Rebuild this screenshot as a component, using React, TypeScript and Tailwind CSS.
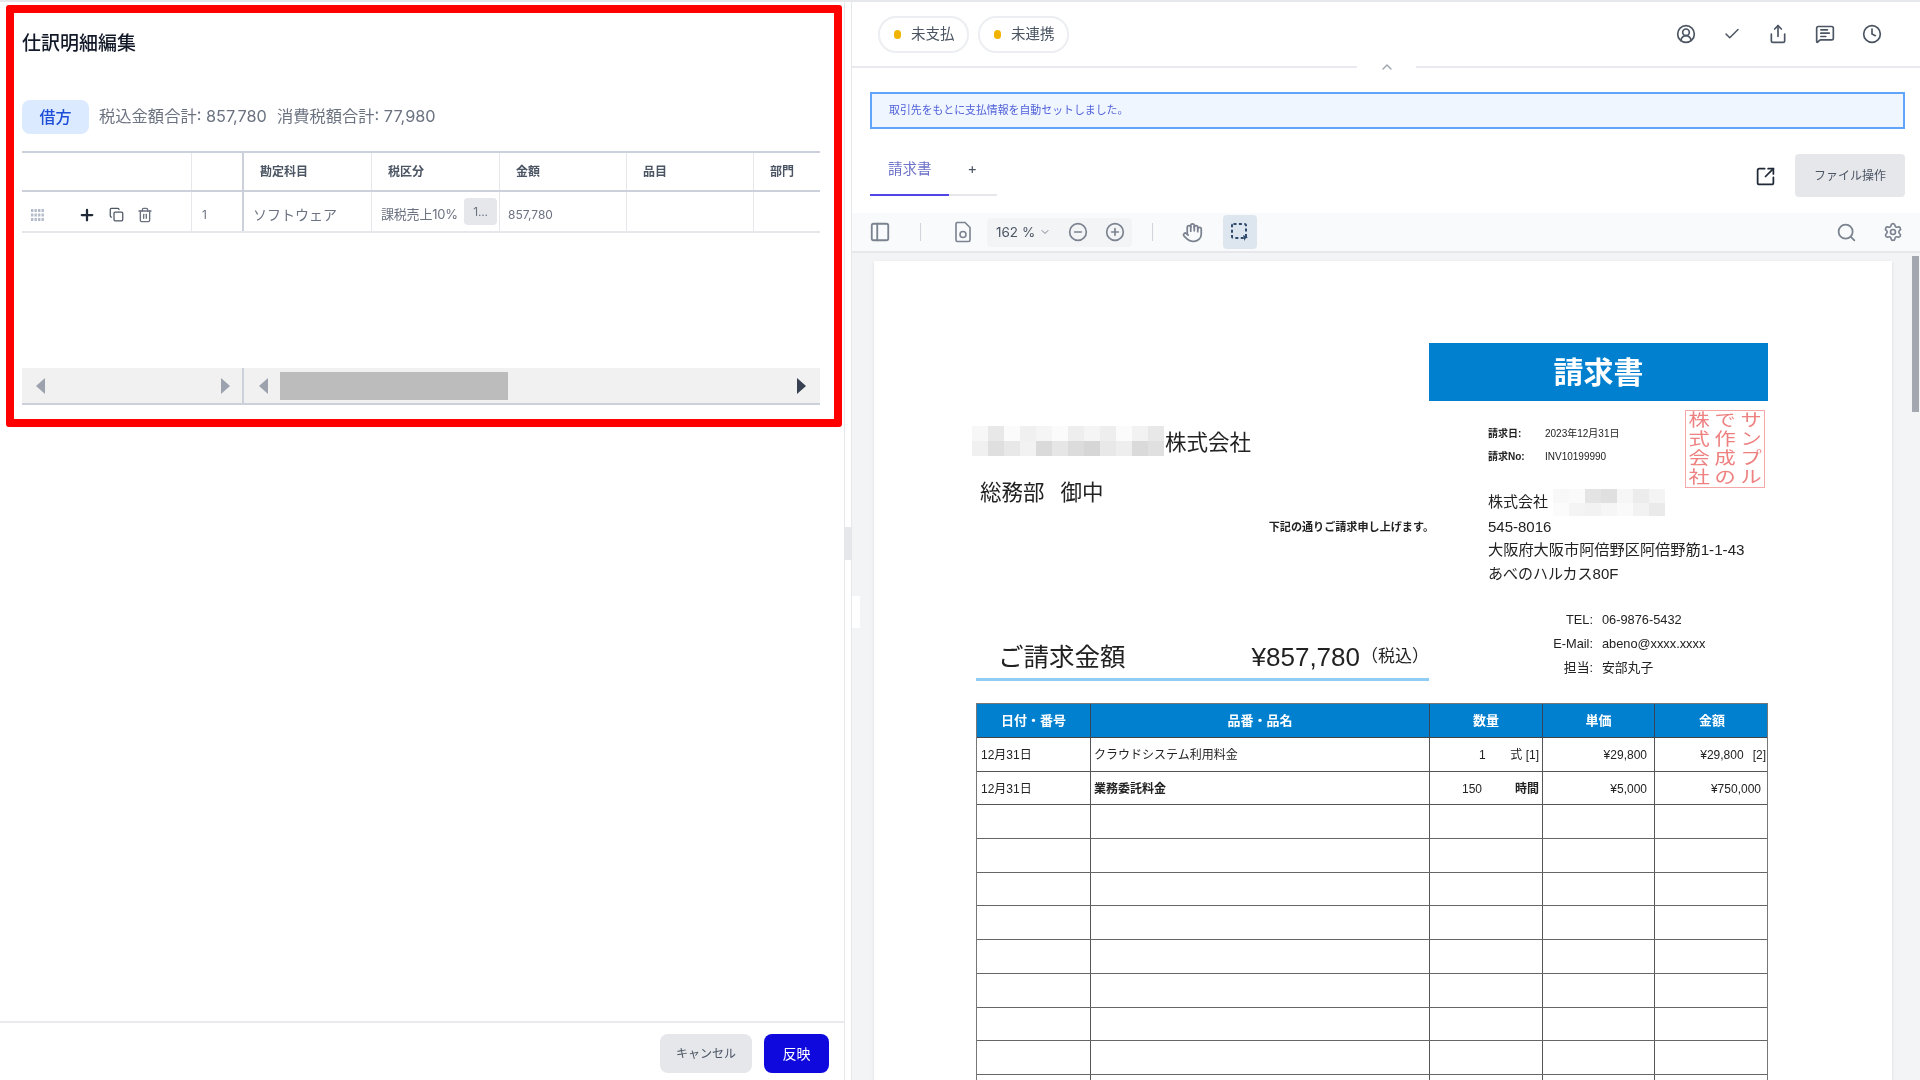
import { Check, ChevronDown, ChevronUp, CircleMinus, CirclePlus, CircleUserRound, Clock, Copy, Hand, MessageSquareText, PanelLeft, Plus, Search, Settings, Share, SquareArrowOutUpRight, Trash2 } from 'lucide-react';

const jaFont = "font-['Inter','Noto_Sans_CJK_JP',sans-serif]";
const docFont = "font-['Liberation_Sans','Noto_Sans_CJK_JP',sans-serif]";

const mosaicA = [
  ['bg-[#f7f7f7]', 'bg-[#e8e8e8]', 'bg-[#fbfbfb]', 'bg-[#f0f0f0]', 'bg-[#f5f5f5]', 'bg-[#fbfbfb]', 'bg-[#eeeeee]', 'bg-[#f5f5f5]', 'bg-[#eeeeee]', 'bg-[#fbfbfb]', 'bg-[#f2f2f2]', 'bg-[#e8e8e8]'],
  ['bg-[#f0f0f0]', 'bg-[#dfdfdf]', 'bg-[#e8e8e8]', 'bg-[#f2f2f2]', 'bg-[#dadada]', 'bg-[#e6e6e6]', 'bg-[#dcdcdc]', 'bg-[#d6d6d6]', 'bg-[#e8e8e8]', 'bg-[#eeeeee]', 'bg-[#dadada]', 'bg-[#e0e0e0]'],
];

const mosaicB = [
  ['bg-[#f8f8f8]', 'bg-[#fafafa]', 'bg-[#e4e4e4]', 'bg-[#e0e0e0]', 'bg-[#f6f6f6]', 'bg-[#ececec]', 'bg-[#f4f4f4]'],
  ['bg-[#fbfbfb]', 'bg-[#f4f4f4]', 'bg-[#f2f2f2]', 'bg-[#f6f6f6]', 'bg-[#fafafa]', 'bg-[#f2f2f2]', 'bg-[#eaeaea]'],
];

const stamp = ['株', 'で', 'サ', '式', '作', 'ン', '会', '成', 'プ', '社', 'の', 'ル'];

const Mosaic = ({ rows, cell }: { rows: string[][]; cell: string }) => (
  <div className="flex flex-col shrink-0">
    {rows.map((row, i) => (
      <div key={i} className="flex">
        {row.map((c, j) => (
          <div key={j} className={`${cell} ${c}`} />
        ))}
      </div>
    ))}
  </div>
);

const Arrow = ({ dir, dark }: { dir: 'left' | 'right'; dark?: boolean }) => (
  <svg width="9" height="16" viewBox="0 0 9 16" className={dark ? 'fill-[#374151]' : 'fill-[#9ca3af]'}>
    <polygon points={dir === 'left' ? '9,0 9,16 0,8' : '0,0 0,16 9,8'} />
  </svg>
);

const Grip = () => (
  <svg width="14" height="12" viewBox="0 0 14 12" className="fill-[#b4bccb]">
    {[0, 3.5, 7, 10.5].flatMap((x) =>
      [0, 4.5, 9].map((y) => <rect key={`${x}-${y}`} x={x} y={y} width="2.4" height="3" />),
    )}
  </svg>
);

const Pill = ({ label }: { label: string }) => (
  <div className="flex items-center w-[91px] h-[37px] pl-[14px] rounded-[18px] border-2 border-[#eceef2] text-[14.5px] text-[#4b5563]">
    <span className="w-[7px] h-[9px] rounded-full bg-[#f0b400] mr-[10px]" />
    {label}
  </div>
);

const headCols = ['勘定科目', '税区分', '金額', '品目', '部門'];

const JournalPanel = () => (
  <section className="ml-[6px] mr-[2px] mt-[3px] h-[422px] border-8 border-[#ff0000] rounded-[3px] pl-2 pr-[14px] pt-[17px] pb-[14px] flex flex-col bg-white">
    <h2 className="text-[19px] leading-7 font-medium text-[#111827]">仕訳明細編集</h2>
    <div className="flex items-center mt-[42px]">
      <span className="w-[67px] h-[34px] rounded-lg bg-[#dbeafe] text-[#1d4ed8] text-[16px] font-medium flex items-center justify-center">借方</span>
      <p className="ml-[10px] -mt-[1px] text-[16.3px] text-[#6b7280] whitespace-nowrap">税込金額合計: 857,780<span className="ml-[10px]">消費税額合計: 77,980</span></p>
    </div>
    <div className="mt-[17px] flex-1 flex flex-col">
      <div className="grid grid-cols-[170px_52px_128px_128px_127px_127px_66px] h-[41px] border-y-2 border-[#cbd0da] text-[12px] font-bold text-[#4b5563]">
        <div className="border-r border-[#e5e7eb]" />
        <div className="border-r-2 border-[#cbd0da]" />
        {headCols.map((h, i) => (
          <div key={h} className={`flex items-center pl-4 ${i < 4 ? 'border-r border-[#e5e7eb]' : ''}`}>{h}</div>
        ))}
      </div>
      <div className="grid grid-cols-[170px_52px_128px_128px_127px_127px_66px] h-[41px] border-b-2 border-[#e5e7eb] text-[#6b7280]">
        <div className="flex items-center pl-[9px] pt-[6px] border-r border-[#e5e7eb]">
          <Grip />
          <Plus size={18} strokeWidth={3} className="ml-[33px] text-[#1f2937]" />
          <Copy size={15} className="ml-[13px] text-[#4b5563]" />
          <Trash2 size={16} className="ml-[13px] text-[#6b7280]" />
        </div>
        <div className="flex items-center pl-[10px] pt-[6px] text-[12px] border-r-2 border-[#cbd0da]">1</div>
        <div className="flex items-center pl-[9px] pt-[5px] text-[14px] border-r border-[#e5e7eb]">ソフトウェア</div>
        <div className="flex items-center pl-[9px] pt-[6px] text-[13px] tracking-[-0.2px] border-r border-[#e5e7eb] whitespace-nowrap">
          課税売上10%
          <span className="ml-auto mr-[2px] -mt-[6px] w-[33px] h-[27px] rounded-sm bg-[#e5e7eb] flex items-center justify-center text-[12px]">1...</span>
        </div>
        <div className="flex items-center pl-2 pt-[6px] text-[12px] border-r border-[#e5e7eb]">857,780</div>
        <div className="border-r border-[#e5e7eb]" />
        <div />
      </div>
      <div className="flex-1" />
      <div className="flex h-[37px] border-b-2 border-[#cbd0da] bg-[#f1f1f1]">
        <div className="w-[222px] flex items-center justify-between pl-[14px] pr-[12px] border-r-2 border-[#cbd0da]">
          <Arrow dir="left" />
          <Arrow dir="right" />
        </div>
        <div className="flex-1 flex items-center pl-[15px] pr-[14px]">
          <Arrow dir="left" />
          <div className="ml-[12px] w-[228px] h-[28px] bg-[#bcbcbc]" />
          <div className="ml-auto"><Arrow dir="right" dark /></div>
        </div>
      </div>
    </div>
  </section>
);

const contactRows = [
  ['TEL:', '06-9876-5432'],
  ['E-Mail:', 'abeno@xxxx.xxxx'],
  ['担当:', '安部丸子'],
];

const lineRows = [
  ['12月31日', 'クラウドシステム利用料金', '1', '式 [1]', '¥29,800', '¥29,800', '[2]'],
  ['12月31日', '業務委託料金', '150', '時間', '¥5,000', '¥750,000', ''],
];

const tableCols = 'grid grid-cols-[114px_339px_113px_112px_114px]';

const Invoice = () => (
  <div className={`w-[1018px] h-[820px] ml-[22px] mt-[8px] bg-white shadow-sm pl-[102px] pt-[82px] overflow-hidden ${docFont} text-[#222222]`}>
    <div className="w-[792px] flex">
      <div className="w-[453px]">
        <div className="mt-[83px] -ml-[4px] flex items-center h-[30px]">
          <Mosaic rows={mosaicA} cell="w-4 h-[15px]" />
          <span className="ml-[1px] mt-[4px] text-[21.5px]">株式会社</span>
        </div>
        <p className="mt-[22px] ml-[4px] text-[21.5px] leading-[30px]">総務部<span className="ml-4">御中</span></p>
        <p className="mt-[11px] -mr-[5px] text-right text-[11.1px] leading-4 font-bold">下記の通りご請求申し上げます。</p>
        <div className="mt-[101px] h-[45px] pl-[22px] flex items-center border-b-[3px] border-[#90cdf4]">
          <span className="text-[25.5px]">ご請求金額</span>
          <span className="ml-auto text-[26px]">¥857,780</span>
          <span className="ml-[1px] text-[17px] whitespace-nowrap">（税込）</span>
        </div>
      </div>
      <div className="relative w-[339px]">
        <div className="h-[58px] bg-[#0080cf] flex items-center justify-center text-white text-[30px] font-bold">請求書</div>
        <div className="pl-[59px]">
          <p className="mt-[26px] flex text-[10px] leading-[14px]"><b className="w-[57px]">請求日:</b>2023年12月31日</p>
          <p className="mt-[9px] flex text-[10px] leading-[14px]"><b className="w-[57px]">請求No:</b>INV10199990</p>
          <div className="mt-[25px] flex items-center h-[27px] text-[15px]">
            株式会社
            <div className="ml-[5px]"><Mosaic rows={mosaicB} cell="w-4 h-[13.5px]" /></div>
          </div>
          <p className="-mt-[1px] text-[15px] leading-[23px]">545-8016</p>
          <p className="text-[15.2px] leading-6 whitespace-nowrap">大阪府大阪市阿倍野区阿倍野筋1-1-43</p>
          <p className="text-[15px] leading-6">あべのハルカス80F</p>
          <div className="mt-[22px]">
            {contactRows.map(([k, v]) => (
              <div key={k} className="grid grid-cols-[105px_1fr] gap-x-[9px] text-[12.8px] leading-6">
                <span className="text-right">{k}</span>
                <span>{v}</span>
              </div>
            ))}
          </div>
        </div>
        <div className="absolute left-[256px] top-[67px] w-[80px] h-[78px] border border-[#f5a8a8] grid grid-cols-3 grid-rows-4 text-[17px] leading-[19px] text-[#ee8080] text-center">
          {stamp.map((s) => <span key={s} className="inline-block scale-x-125">{s}</span>)}
        </div>
      </div>
    </div>
    <div className="mt-[22px] w-[792px] border-x border-[#777777] border-t border-[#777777]">
      <div className={`${tableCols} h-[34px] bg-[#0080cf] border-b border-[#444444] text-white text-[13px] font-bold text-center`}>
        {['日付・番号', '品番・品名', '数量', '単価', '金額'].map((h, i) => (
          <div key={h} className={`flex items-center justify-center ${i < 4 ? 'border-r border-[#33475b]' : ''}`}>{h}</div>
        ))}
      </div>
      {lineRows.map((r, i) => (
        <div key={i} className={`${tableCols} h-[33.7px] border-b border-[#555555] text-[12px]`}>
          <div className="flex items-center pl-[4px] pt-[2px] border-r border-[#555555]">{r[0]}</div>
          <div className={`flex items-center pl-[3px] pt-[2px] border-r border-[#555555] ${i === 1 ? 'font-bold' : ''}`}>{r[1]}</div>
          <div className="flex items-center border-r border-[#555555] pr-[3px] pt-[2px]">
            <span className={i === 0 ? 'ml-[49px]' : 'ml-[32px]'}>{r[2]}</span>
            <span className={`ml-auto ${i === 1 ? 'font-bold' : ''}`}>{r[3]}</span>
          </div>
          <div className="flex items-center justify-end pr-[7px] pt-[2px] border-r border-[#555555]">{r[4]}</div>
          <div className="flex items-center justify-end pr-[8px] pt-[2px] gap-[9px]">
            <span>{r[5]}</span>
            {r[6] && <span className="-mr-[5px]">{r[6]}</span>}
          </div>
        </div>
      ))}
      {Array.from({ length: 10 }).map((_, i) => (
        <div key={i} className={`${tableCols} h-[33.7px] border-b border-[#666666]`}>
          <div className="border-r border-[#555555]" />
          <div className="border-r border-[#555555]" />
          <div className="border-r border-[#555555]" />
          <div className="border-r border-[#555555]" />
          <div />
        </div>
      ))}
    </div>
  </div>
);

const ViewerPanel = () => (
  <div className="relative flex-1 flex flex-col border-l border-[#e5e7eb] overflow-hidden">
    <div className="h-[64px] flex items-center pl-[26px] pr-[38px] shrink-0 text-[#4b5563]">
      <div className="flex items-center gap-[9px]">
        <Pill label="未支払" />
        <Pill label="未連携" />
      </div>
      <div className="ml-auto flex items-center gap-[27px]">
        <CircleUserRound size={20} />
        <Check size={18} />
        <Share size={20} />
        <MessageSquareText size={20} />
        <Clock size={20} />
      </div>
    </div>
    <div className="relative h-[2px] shrink-0 bg-[#e8eaf0]">
      <div className="absolute left-[505px] -top-[6px] w-[59px] h-[14px] bg-white flex items-center justify-center">
        <ChevronUp size={16} className="text-[#9ca3af]" />
      </div>
    </div>
    <div className="ml-[18px] mr-[15px] mt-[24px] h-[37px] shrink-0 border-2 border-[#60a5fa] bg-[#eff6ff] flex items-center pl-[17px] text-[10.9px] text-[#4f5fd8] whitespace-nowrap">
      取引先をもとに支払情報を自動セットしました。
    </div>
    <div className="ml-[18px] mr-[15px] mt-[25px] h-[43px] shrink-0 flex">
      <div className="w-[127px] h-[42px] flex flex-col">
        <div className="flex-1 flex items-start pt-[5px] pl-[18px] text-[14.5px] text-[#6d72c9] leading-5">
          請求書
          <span className="ml-[36px] text-[#4b5563]">+</span>
        </div>
        <div className="h-[2px] bg-[#e5e7eb] -mb-0">
          <div className="w-[79px] h-[2px] bg-[#4f46e5]" />
        </div>
      </div>
      <div className="ml-auto flex items-center">
        <SquareArrowOutUpRight size={21} className="text-[#1f2937] mt-[2px]" />
        <button type="button" className="ml-[19px] w-[110px] h-[43px] rounded bg-[#e5e7eb] text-[12px] text-[#4b5563]">ファイル操作</button>
      </div>
    </div>
    <div className="mt-[16px] h-[40px] shrink-0 flex items-center pl-[17px] pr-[17px] bg-[#f9fafb] border-b-2 border-[#e5e7eb] text-[#7b8290]">
      <PanelLeft size={22} />
      <span className="ml-[29px] w-px h-[18px] bg-[#d1d5db]" />
      <svg width="18" height="22" viewBox="0 0 18 22" fill="none" stroke="currentColor" strokeWidth="1.6" className="ml-[33px]">
        <path d="M3 1.5h8l5 5V19a1.5 1.5 0 0 1-1.5 1.5h-11A1.5 1.5 0 0 1 2 19V3a1.5 1.5 0 0 1 1-1.5z" />
        <circle cx="9" cy="13.5" r="3" />
      </svg>
      <div className="ml-[15px] w-[145px] h-[29px] rounded bg-[#f3f4f6] flex items-center pl-[9px]">
        <span className="text-[13.5px] text-[#4b5563] whitespace-nowrap">162 %</span>
        <ChevronDown size={12} className="ml-[4px]" />
        <CircleMinus size={20} className="ml-[17px]" />
        <CirclePlus size={20} className="ml-[17px]" />
      </div>
      <span className="ml-[20px] w-px h-[18px] bg-[#d1d5db]" />
      <Hand size={21} className="ml-[29px]" />
      <div className="ml-[20px] w-[34px] h-[34px] rounded bg-[#dde6ef] flex items-center justify-center">
        <svg width="20" height="20" viewBox="0 0 20 20" fill="none" stroke="#2f4a6d" strokeWidth="2" strokeDasharray="3 2.4">
          <rect x="2" y="2" width="14" height="14" rx="1.5" />
          <path d="M13 13l5 2.5-2.5 1-1 2.5z" fill="#2f4a6d" stroke="none" />
        </svg>
      </div>
      <Search size={21} className="ml-auto mr-[26px]" />
      <Settings size={20} />
    </div>
    <div className="flex-1 flex bg-[#f3f4f6] overflow-hidden">
      <Invoice />
      <div className="ml-auto w-2 pt-[3px] shrink-0">
        <div className="w-[7px] h-[156px] bg-[#a3a8b0]" />
      </div>
    </div>
    <div className="absolute left-0 top-[594px] w-[8px] h-[32px] bg-white" />
  </div>
);

export default function App() {
  return (
    <div className={`w-[1920px] h-[1080px] overflow-hidden bg-white ${jaFont} border-t-2 border-[#e5e7eb] flex blur-[0.6px]`}>
      <div className="relative w-[845px] flex flex-col border-r border-[#e5e7eb]">
        <JournalPanel />
        <div className="flex-1" />
        <div className="h-[59px] border-t-2 border-[#e8eaf0] flex items-start justify-end gap-3 pt-[11px] pr-[15px]">
          <button type="button" className="w-[92px] h-[39px] rounded-lg bg-[#e5e7eb] text-[12px] text-[#4b5563]">キャンセル</button>
          <button type="button" className="w-[65px] h-[39px] rounded-lg bg-[#1009dd] text-[14px] text-white">反映</button>
        </div>
      </div>
      <div className="w-[6px] flex items-start">
        <div className="mt-[525px] w-[6px] h-[33px] bg-[#e5e7eb]" />
      </div>
      <ViewerPanel />
    </div>
  );
}
